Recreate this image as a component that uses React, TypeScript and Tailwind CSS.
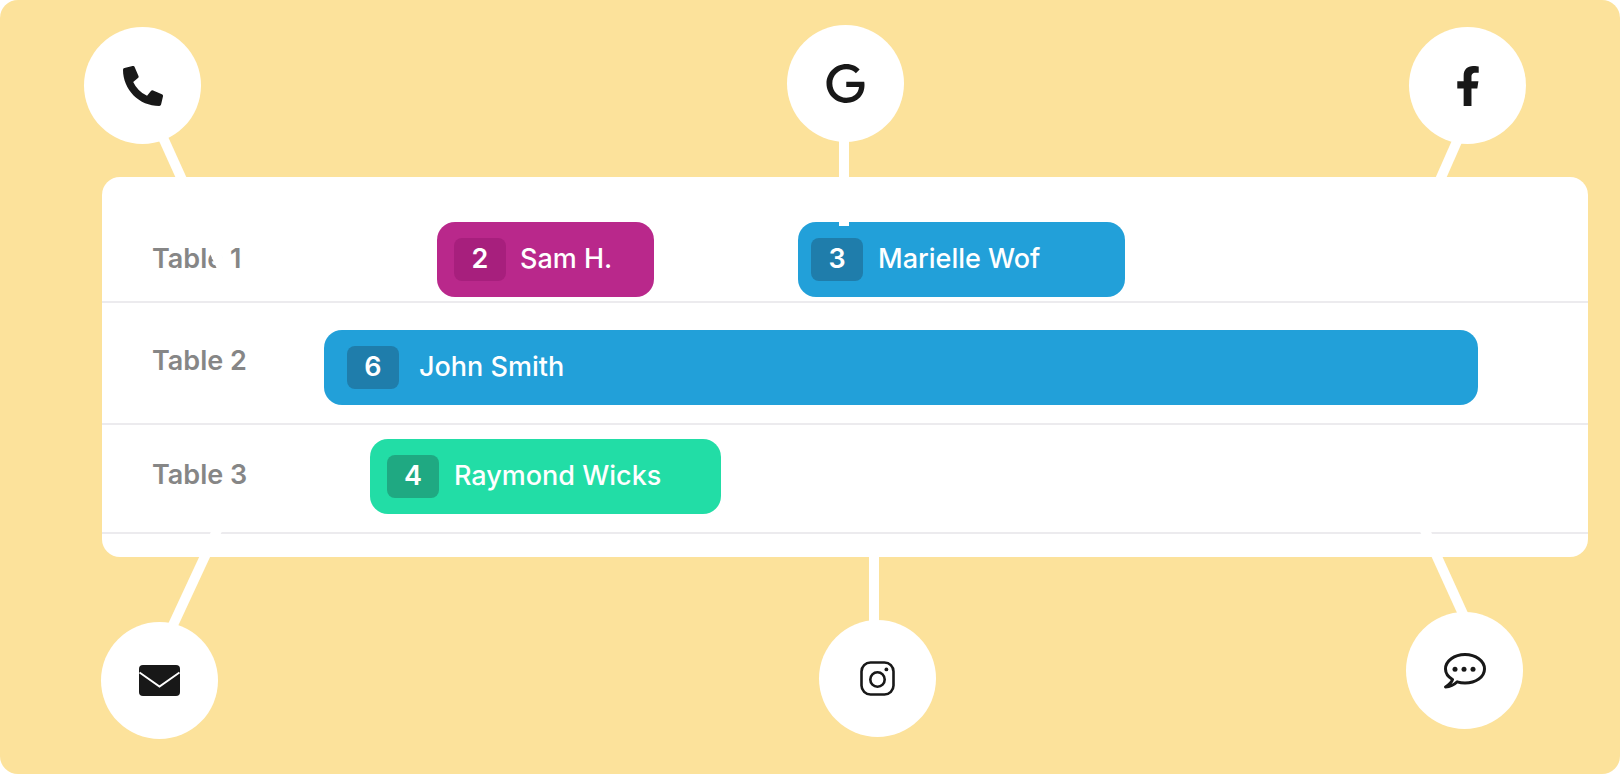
import React from "react";
import { FaPhoneAlt, FaFacebookF } from "react-icons/fa";
import { SiGoogle } from "react-icons/si";

const INK = "#181818";

interface Booking {
  size: number;
  name: string;
  pill: string;
  badge: string;
  text: string;
}

interface TableRow {
  label: string;
  row: string;
  labelOffset: string;
  bookings: Booking[];
}

const rows: TableRow[] = [
  {
    label: "Table 1",
    row: "h-[126px] pt-[45px]",
    labelOffset: "mt-0",
    bookings: [
      {
        size: 2,
        name: "Sam H.",
        pill: "ml-[184px] w-[217px] pl-[17px] bg-[#b9288b]",
        badge: "bg-[#a71f7d]",
        text: "ml-[14px]",
      },
      {
        size: 3,
        name: "Marielle Wof",
        pill: "ml-[144px] w-[327px] pl-[13px] bg-[#22a0d9]",
        badge: "bg-[#1f7dab]",
        text: "ml-[15px]",
      },
    ],
  },
  {
    label: "Table 2",
    row: "h-[122px] pt-[27px]",
    labelOffset: "-mt-[6px]",
    bookings: [
      {
        size: 6,
        name: "John Smith",
        pill: "ml-[71px] w-[1154px] pl-[23px] bg-[#22a0d9]",
        badge: "bg-[#1f7dab]",
        text: "ml-[20px]",
      },
    ],
  },
  {
    label: "Table 3",
    row: "h-[109px] pt-[14px]",
    labelOffset: "-mt-[1px]",
    bookings: [
      {
        size: 4,
        name: "Raymond Wicks",
        pill: "ml-[117px] w-[351px] pl-[17px] bg-[#22dda6]",
        badge: "bg-[#1fa982]",
        text: "ml-[15px]",
      },
    ],
  },
];

const MailIcon = () => (
  <svg width="41" height="31" viewBox="0 0 41 31">
    <rect width="41" height="31" rx="4" fill={INK} />
    <path d="M0.5 7.5 L20.5 21.5 L40.5 7.5" fill="none" stroke="#fff" strokeWidth="2" />
  </svg>
);

const InstagramIcon = () => (
  <svg width="35" height="35" viewBox="0 0 35 35" fill="none" stroke={INK} strokeWidth="2.6">
    <rect x="1.5" y="1.5" width="32" height="32" rx="9" />
    <circle cx="17.5" cy="18.5" r="7.2" />
    <circle cx="26.4" cy="8.4" r="1.9" fill={INK} stroke="none" />
  </svg>
);

const ChatIcon = () => (
  <svg width="42" height="36" viewBox="0 0 42 36" fill="none">
    <path
      d="M8.5 26.5 C4 23.8 1.5 20.2 1.5 16 C1.5 8 10.2 1.5 21 1.5 C31.8 1.5 40.5 8 40.5 16 C40.5 24 31.8 30 21 30 C18.2 30 15.6 29.6 13.2 28.8 C10.4 31.6 6.4 33.8 1.5 34 C4.8 32 7.6 29.6 8.5 26.5 Z"
      stroke={INK}
      strokeWidth="3"
      strokeLinejoin="round"
    />
    <circle cx="11" cy="16.3" r="2.5" fill={INK} />
    <circle cx="20" cy="16.3" r="2.5" fill={INK} />
    <circle cx="29" cy="16.3" r="2.5" fill={INK} />
  </svg>
);

// round nodes sit on the canvas, the spokes run from them into the card
const Node = ({ place, children }: { place: string; children: React.ReactNode }) => (
  <div className={`absolute flex h-[117px] w-[117px] items-center justify-center rounded-full bg-white ${place}`}>
    {children}
  </div>
);

const Spokes = () => (
  <svg className="pointer-events-none absolute left-0 top-0" width="1620" height="774" stroke="#fff" strokeWidth="10">
    <line x1="160" y1="131" x2="222" y2="268" />
    <line x1="844" y1="130" x2="844" y2="226" />
    <line x1="1462" y1="130" x2="1432" y2="198" />
    <line x1="167" y1="638" x2="219" y2="526" />
    <line x1="874" y1="630" x2="874" y2="540" />
    <line x1="1468" y1="625" x2="1423" y2="526" />
  </svg>
);

export default function App() {
  return (
    <div className="h-[774px] w-[1620px] bg-white font-['Inter',sans-serif]">
      <div className="relative h-full rounded-[18px] bg-[#fce29b] pl-[102px] pt-[177px]">
        <div className="h-[380px] w-[1486px] rounded-[18px] bg-white">
          {rows.map((r) => (
            <div key={r.label} className={`flex items-start border-b-2 border-[#ecebee] pl-[50px] ${r.row}`}>
              <div className={`flex h-[75px] w-[101px] shrink-0 items-center text-[27px] font-semibold text-[#868686] ${r.labelOffset}`}>
                {r.label}
              </div>
              {r.bookings.map((b) => (
                <div key={b.name} className={`flex h-[75px] shrink-0 items-center rounded-[18px] ${b.pill}`}>
                  <div className={`flex h-[43px] w-[52px] items-center justify-center rounded-[8px] text-[27px] font-semibold text-white ${b.badge}`}>
                    {b.size}
                  </div>
                  <span className={`text-[27px] font-medium text-white ${b.text}`}>{b.name}</span>
                </div>
              ))}
            </div>
          ))}
        </div>

        <Spokes />

        <Node place="left-[84px] top-[27px]">
          <FaPhoneAlt size={40} color={INK} />
        </Node>
        <Node place="left-[787px] top-[25px]">
          <SiGoogle size={39} color={INK} />
        </Node>
        <Node place="left-[1409px] top-[27px]">
          <FaFacebookF size={40} color={INK} />
        </Node>
        <Node place="left-[101px] top-[622px]">
          <MailIcon />
        </Node>
        <Node place="left-[819px] top-[620px]">
          <InstagramIcon />
        </Node>
        <Node place="left-[1406px] top-[612px]">
          <ChatIcon />
        </Node>
      </div>
    </div>
  );
}
